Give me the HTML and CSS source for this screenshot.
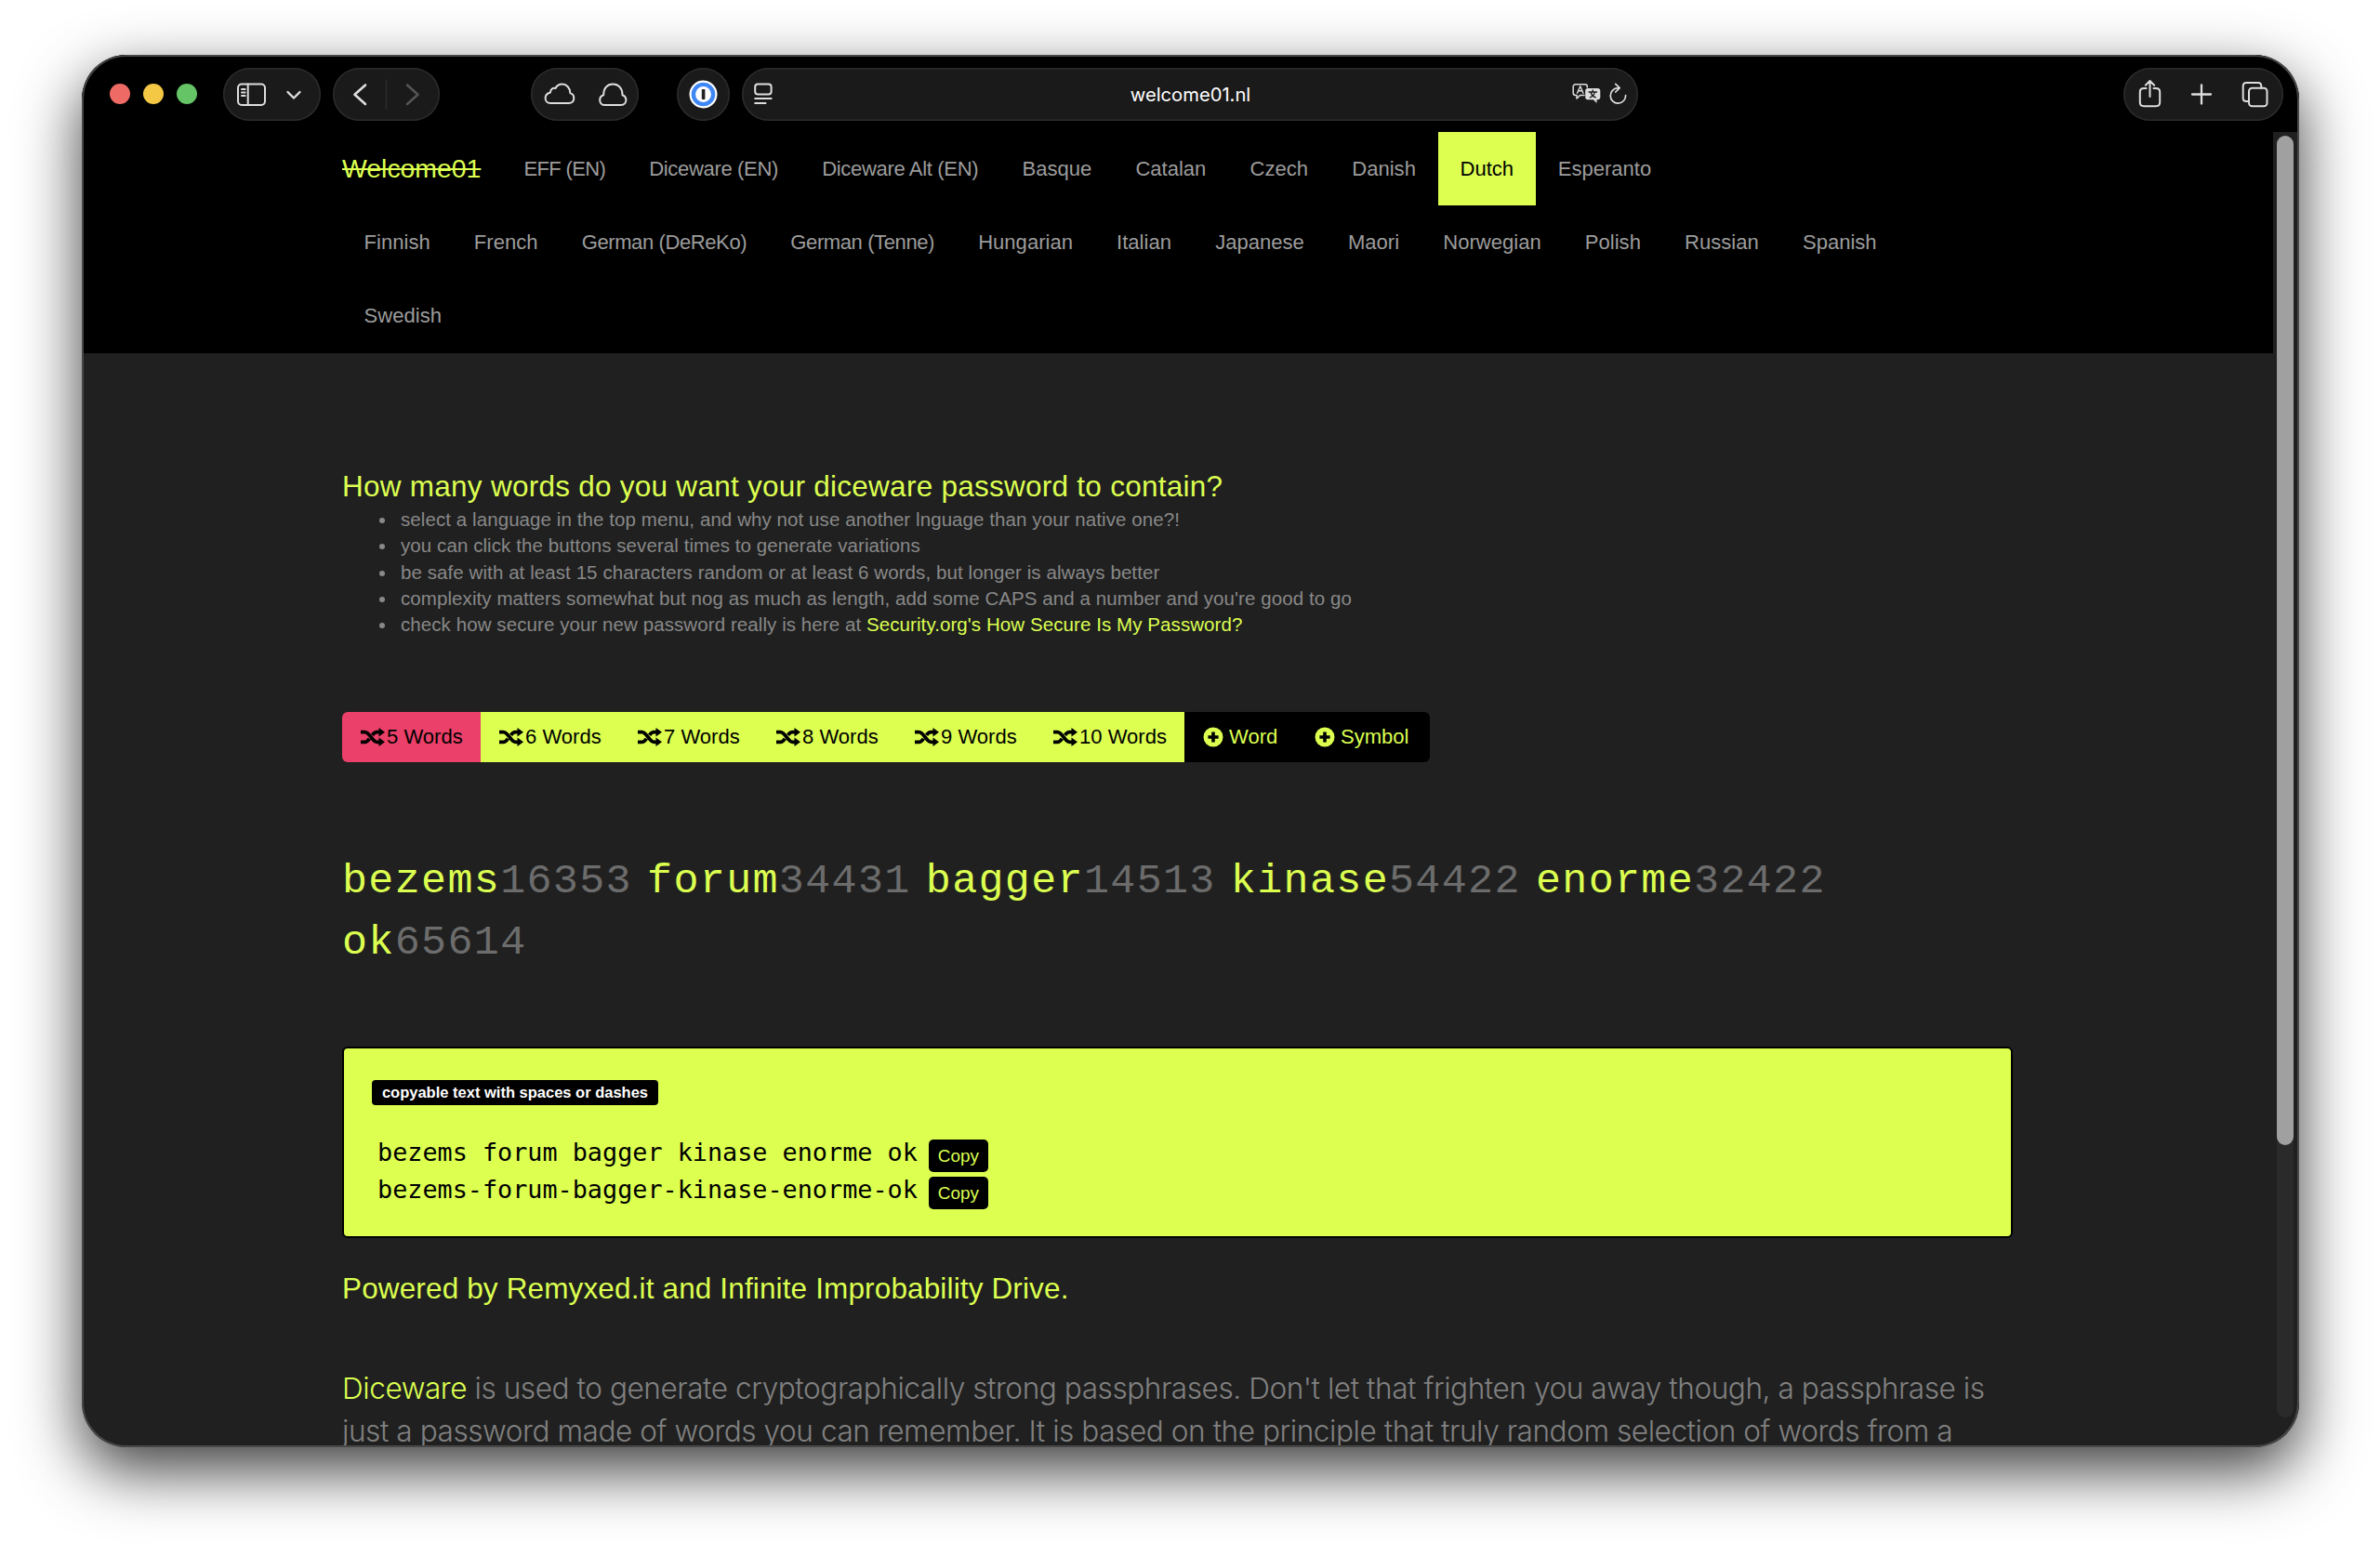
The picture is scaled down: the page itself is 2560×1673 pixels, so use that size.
FILE: index.html
```html
<!DOCTYPE html>
<html lang="en">
<head>
    <meta charset="UTF-8">
    <title>Welcome01</title>
    <link rel="stylesheet" href="styles.css">
</head>
<body>

    <!-- icons used more than once -->
    <svg class="sprite">
        <symbol id="random" viewBox="0 0 26 20">
            <path d="M0 4.6H4.6C9.5 4.6 12.5 15.4 17.5 15.4H20M0 15.4H4.6C6.5 15.4 8 13.8 9.3 11.8M12.6 7.8C14 5.8 15.5 4.6 17.5 4.6H20" fill="none" stroke="#000" stroke-width="3.8"/>
            <path d="M19.5 0L26 4.7L19.5 9.4ZM19.5 10.6L26 15.3L19.5 20Z"/>
        </symbol>
        <symbol id="plus" viewBox="0 0 22 22">
            <circle cx="11" cy="11" r="10.5" fill="#dcff50"/>
            <path d="M11 5.4V16.6M5.4 11H16.6" stroke="#000" stroke-width="3.6"/>
        </symbol>
    </svg>

    <div class="window">

        <div class="toolbar">
            <div class="lights">
                <span class="red"></span>
                <span class="yellow"></span>
                <span class="green"></span>
            </div>

            <div class="pill sidebar">
                <svg width="105" height="57" viewBox="0 0 105 57">
                    <rect x="16" y="17.5" width="29" height="22.5" rx="4"/>
                    <path d="M26.7 17.5V40M20 23H23.6M20 26.5H23.6M20 30H23.6"/>
                    <path d="M69.5 26L76 32.5L82.5 26" stroke-width="2.4"/>
                </svg>
            </div>

            <div class="pill history">
                <svg width="115" height="57" viewBox="0 0 115 57">
                    <path d="M35 18.5L23.5 28.8L35 39" stroke-width="2.6"/>
                    <path d="M57.5 13V44" stroke="#2c2c2c" stroke-width="1.5"/>
                    <path d="M80 18.5L91.5 28.8L80 39" stroke="#545454" stroke-width="2.6"/>
                </svg>
            </div>

            <div class="pill clouds">
                <svg width="116" height="57" viewBox="0 0 116 57">
                    <path d="M21 38H40.5C44.5 38 46.3 35.4 46.3 32.5C46.3 29.8 44.6 27.8 42.3 27.1C42.2 21.5 38.4 17.6 33.8 17.6C30.3 17.6 27.8 19.4 26.5 22C23.4 21.3 21 23.3 21 26.5C18 27.3 15.6 29.5 15.6 32.5C15.6 35.8 18 38 21 38Z"/>
                    <path d="M79 40H97C100.3 40 102.4 37.6 102.4 34.6C102.4 32 100.8 30 98.5 29.2C98.6 22 94.3 17.6 88.2 17.6C82.2 17.6 78.1 22 78.2 29.2C75.6 30 74.2 32 74.2 34.6C74.2 37.6 76 40 79 40Z"/>
                </svg>
            </div>

            <div class="pill password">
                <svg width="57" height="57" viewBox="0 0 57 57">
                    <circle cx="28.5" cy="28.5" r="15" fill="#fff" stroke="none"/>
                    <circle cx="28.5" cy="28.5" r="10.6" fill="#fff" stroke="#3f87f5" stroke-width="4.4"/>
                    <rect x="26.8" y="23" width="3.6" height="11" rx=".8" fill="#222" stroke="none"/>
                </svg>
            </div>

            <div class="pill address">
                <svg class="reader" width="20" height="24" viewBox="0 0 20 24">
                    <rect x="1.2" y="1.6" width="17.4" height="11" rx="3"/>
                    <path d="M1.2 17H18.6M1.2 22H12.5"/>
                </svg>
                <span>welcome01.nl</span>
                <svg class="page-tools" width="60" height="24" viewBox="0 0 60 24">
                    <path d="M13 13.5H8.5L5 17V13.5H3.7C2.2 13.5 1.2 12.5 1.2 11V4.3C1.2 2.8 2.2 1.8 3.7 1.8H13.8C15.3 1.8 16.3 2.8 16.3 4.3V5" stroke-width="1.5"/>
                    <path d="M5.5 11.3L8.8 3.8L12 11.3M6.6 8.8H11" stroke-width="1.4"/>
                    <path d="M17 6H27.5C29.3 6 30.3 7 30.3 8.7V15.5C30.3 17.2 29.3 18.3 27.5 18.3H26.5V22L22.8 18.3H17C15.2 18.3 14.2 17.2 14.2 15.5V8.7C14.2 7 15.2 6 17 6Z" fill="#dedede" stroke="none"/>
                    <path d="M18 10H26.5M22.2 8V10M19.3 15.8C22.5 14.5 24 12.8 24.5 10M20 10C20.6 12.8 22.3 14.8 25.3 15.8" stroke="#1a1a1a" stroke-width="1.4"/>
                    <path d="M49.5 5.7A8.2 8.2 0 1 0 57.6 13.6M46.7 1.3L51.2 5.7L46.7 10" stroke-width="1.7"/>
                </svg>
            </div>

            <div class="pill actions">
                <svg width="172" height="57" viewBox="0 0 172 57">
                    <path d="M24.5 22H22C19.2 22 17.8 23.4 17.8 26V37C17.8 39.8 19.2 41.2 22 41.2H35C37.8 41.2 39.2 39.8 39.2 37V26C39.2 23.4 37.8 22 35 22H32.5M28.5 31V14.5M23.8 18.7L28.5 14L33.2 18.7"/>
                    <path d="M74 28.5H94M84 18.5V38.5" stroke-width="2.3"/>
                    <rect x="135" y="21.8" width="19.5" height="19.4" rx="3.5"/>
                    <path d="M135 36H132.3C130 36 128.7 34.8 128.7 32.5V19.7C128.7 17.4 130 16 132.3 16H144.8C147 16 148.3 17.4 148.3 19.7V21.8"/>
                </svg>
            </div>
        </div>

        <div class="page">

            <div class="view">
                <nav>
                    <div class="container">
                        <a class="brand" href="#">Welcome01</a>
                        <ul>
                            <li class="short"><a href="#">EFF (EN)</a></li>
                            <li class="long"><a href="#">Diceware (EN)</a></li>
                            <li class="long"><a href="#">Diceware Alt (EN)</a></li>
                            <li><a href="#">Basque</a></li>
                            <li><a href="#">Catalan</a></li>
                            <li><a href="#">Czech</a></li>
                            <li><a href="#">Danish</a></li>
                            <li class="active"><a href="#">Dutch</a></li>
                            <li><a href="#">Esperanto</a></li>
                        </ul>
                        <ul class="more">
                            <li><a href="#">Finnish</a></li>
                            <li><a href="#">French</a></li>
                            <li class="long"><a href="#">German (DeReKo)</a></li>
                            <li class="long"><a href="#">German (Tenne)</a></li>
                            <li><a href="#">Hungarian</a></li>
                            <li><a href="#">Italian</a></li>
                            <li><a href="#">Japanese</a></li>
                            <li><a href="#">Maori</a></li>
                            <li><a href="#">Norwegian</a></li>
                            <li><a href="#">Polish</a></li>
                            <li><a href="#">Russian</a></li>
                            <li><a href="#">Spanish</a></li>
                            <li><a href="#">Swedish</a></li>
                        </ul>
                    </div>
                </nav>

                <main class="container">
                    <h3>How many words do you want your diceware password to contain?</h3>
                    <ul class="tips">
                        <li>select a language in the top menu, and why not use another lnguage than your native one?!</li>
                        <li>you can click the buttons several times to generate variations</li>
                        <li>be safe with at least 15 characters random or at least 6 words, but longer is always better</li>
                        <li>complexity matters somewhat but nog as much as length, add some CAPS and a number and you're good to go</li>
                        <li>check how secure your new password really is here at <a href="#">Security.org's How Secure Is My Password?</a></li>
                    </ul>

                    <div class="buttons">
                        <button class="words current"><svg><use href="#random"/></svg>5 Words</button>
                        <button class="words"><svg><use href="#random"/></svg>6 Words</button>
                        <button class="words"><svg><use href="#random"/></svg>7 Words</button>
                        <button class="words"><svg><use href="#random"/></svg>8 Words</button>
                        <button class="words"><svg><use href="#random"/></svg>9 Words</button>
                        <button class="words ten"><svg><use href="#random"/></svg>10 Words</button>
                        <button class="add"><svg><use href="#plus"/></svg>Word</button>
                        <button class="add symbol"><svg><use href="#plus"/></svg>Symbol</button>
                    </div>

                    <p class="phrase">bezems<span>16353</span> forum<span>34431</span> bagger<span>14513</span> kinase<span>54422</span> enorme<span>32422</span> ok<span>65614</span></p>

                    <div class="well">
                        <span class="label">copyable text with spaces or dashes</span>
                        <div class="copy"><code>bezems forum bagger kinase enorme ok</code><button>Copy</button></div>
                        <div class="copy"><code>bezems-forum-bagger-kinase-enorme-ok</code><button>Copy</button></div>
                    </div>

                    <h3 class="powered">Powered by Remyxed.it and Infinite Improbability Drive.</h3>

                    <p class="lead"><a href="#">Diceware</a> is used to generate cryptographically strong passphrases. Don't let that frighten you away though, a passphrase is<br>just a password made of words you can remember. It is based on the principle that truly random selection of words from a</p>
                </main>
            </div>

            <div class="scrollbar">
                <div class="track"><div class="thumb"></div></div>
            </div>

        </div>

    </div>

</body>
</html>
```
FILE: styles.css
```css
* {
    box-sizing: border-box;
}

html, body {
    margin: 0;
    height: 1673px;
    overflow: hidden;
    background: #fff;
}

body {
    padding: 59px 0 0 88px;
    font-family: "Liberation Sans", Arial, sans-serif;
    font-size: 22.06px;
}

a {
    color: #dcff50;
    text-decoration: none;
}

ul, p, h3 {
    margin: 0;
    padding: 0;
    font-weight: normal;
}

button {
    border: 0;
    padding: 0;
    font-family: inherit;
}

.sprite {
    position: absolute;
    width: 0;
    height: 0;
}

.window {
    position: relative;
    display: flex;
    flex-direction: column;
    width: 2385px;
    height: 1498px;
    border-radius: 48px;
    overflow: hidden;
    background: #202020;
    box-shadow: 0 25px 66px rgba(0, 0, 0, 0.76);
}

/* thin light edge over everything */
.window::after {
    content: "";
    position: absolute;
    inset: 0;
    border: 2px solid #474747;
    border-radius: 48px;
    pointer-events: none;
}

/* toolbar */

.toolbar {
    display: flex;
    align-items: center;
    flex: none;
    height: 83px;
    padding: 1px 17px 0 30px;
    background: #000;
}

.lights {
    display: flex;
    gap: 14px;
    margin-right: 28px;
}

.lights span {
    width: 22px;
    height: 22px;
    border-radius: 50%;
}

.lights .red { background: #ed6a65; }
.lights .yellow { background: #f4c745; }
.lights .green { background: #64c466; }

.pill {
    display: flex;
    align-items: center;
    height: 57px;
    border-radius: 29px;
    background: #1a1a1a;
    box-shadow: inset 0 0 0 1.5px #2b2b2b;
}

.pill svg {
    fill: none;
    stroke: #dedede;
    stroke-width: 2;
    stroke-linecap: round;
    stroke-linejoin: round;
}

.history { margin-left: 13px; }
.clouds { margin-left: 98px; }
.password { margin-left: 41px; }

.address {
    justify-content: space-between;
    width: 964px;
    margin-left: 13px;
    padding: 0 11px 0 13px;
    color: #fff;
    font-family: Inter, sans-serif;
    font-size: 20.2px;
}

.address span {
    margin-left: 39px;
}

.actions { margin-left: auto; }

/* page */

.page {
    display: flex;
    flex: 1;
    min-height: 0;
}

.view {
    width: 2357px;
    overflow: hidden;
}

.container {
    width: 1797px;
    margin: 0 auto;
}

nav {
    height: 238px;
    background: #000;
    line-height: 80px;
}

nav .container {
    display: flex;
    flex-wrap: wrap;
}

nav ul {
    display: flex;
    flex-wrap: wrap;
    list-style: none;
}

nav .more {
    width: 100%;
}

nav li a {
    display: block;
    height: 78.8px;
    padding: 0 23.6px;
    color: #9c9c9c;
}

nav .short { letter-spacing: -0.7px; }
nav .long { letter-spacing: -0.35px; }
nav .more .long { letter-spacing: -0.42px; }

nav .active a {
    padding: 0 24px;
    background: #dcff50;
    color: #000;
}

.brand {
    height: 78.8px;
    padding-right: 22.6px;
    font-size: 28.4px;
    line-height: 78.8px;
    text-decoration: line-through;
}

main {
    padding-top: 126px;
}

h3 {
    color: #dcff50;
    font-size: 31.5px;
    line-height: 34.7px;
    letter-spacing: 0.26px;
}

.tips {
    margin: 4px 0 79px;
    padding-left: 59px;
    color: #888;
    font-size: 20.5px;
    line-height: 28.4px;
    letter-spacing: 0.08px;
}

.tips li {
    padding-left: 4px;
}

.buttons {
    display: flex;
    width: 1170px;
    height: 54px;
    border-radius: 6px;
    overflow: hidden;
}

.buttons button {
    display: flex;
    align-items: center;
    padding-left: 20px;
    font-size: 22.06px;
    color: #000;
}

.words {
    width: 149px;
    background: #dcff50;
}

.words svg {
    width: 26px;
    height: 20px;
    margin-right: 2px;
}

.buttons .current { background: #ea4069; }
.buttons .ten { width: 161px; }

.buttons .add {
    width: 120px;
    background: #000;
    color: #dcff50;
}

.buttons .symbol { width: 144px; }

.add svg {
    width: 22px;
    height: 22px;
    margin-right: 6px;
}

.phrase {
    margin: 96px 0 78px;
    color: #dcff50;
    font-family: "Liberation Mono", monospace;
    font-size: 45px;
    line-height: 66.2px;
    letter-spacing: 1.35px;
    word-spacing: -12.2px;
}

.phrase span {
    color: #6c6c6c;
}

.well {
    height: 206px;
    padding: 34px 30px;
    border: 2px solid #000;
    border-radius: 6px;
    background: #dcff50;
}

.label {
    display: block;
    width: 308px;
    height: 27px;
    margin-bottom: 31px;
    border-radius: 4px;
    background: #000;
    color: #fff;
    font-size: 16.5px;
    font-weight: bold;
    line-height: 26px;
    text-align: center;
}

.copy {
    display: flex;
    height: 40.3px;
    padding-left: 6px;
}

code {
    font-family: "DejaVu Sans Mono", monospace;
    font-size: 26.8px;
    line-height: 40.3px;
}

.copy button {
    width: 64px;
    height: 35px;
    margin: 6px 0 0 12px;
    border-radius: 5px;
    background: #000;
    color: #dcff50;
    font-size: 18.9px;
}

.powered {
    margin: 37px 0 67px;
    letter-spacing: 0.14px;
}

.lead {
    color: #808080;
    font-family: Inter, sans-serif;
    font-size: 31.6px;
    font-weight: 300;
    line-height: 46.2px;
    letter-spacing: -0.46px;
    white-space: nowrap;
}

/* scrollbar */

.scrollbar {
    flex: 1;
    padding: 4px 0 0 4px;
    background: #202020;
}

.track {
    width: 18px;
    height: 1379px;
    border-radius: 9px;
    background: #2a2a2a;
}

.thumb {
    height: 1086px;
    border-radius: 9px;
    background: #a0a0a0;
}
```
